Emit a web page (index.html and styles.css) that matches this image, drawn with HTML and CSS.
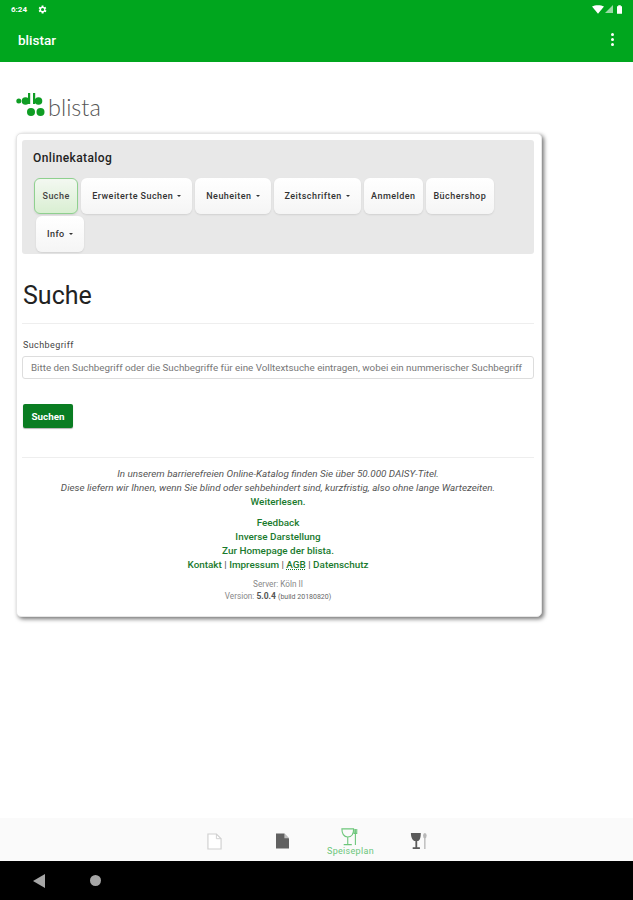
FILE: index.html
```html
<!DOCTYPE html>
<html lang="de">
<head>
<meta charset="utf-8">
<title>blistar</title>
<link rel="stylesheet" href="styles.css">
</head>
<body>
<div class="app">
  <header class="appbar">
    <div class="status">
      <div class="status-left">
        <span class="time">6:24</span>
        <svg class="gear" viewBox="0 0 24 24" width="11" height="11"><path fill="#fff" d="M19.4 13a7.5 7.5 0 0 0 0-2l2.1-1.6-2-3.500-2.500 1a7.500 7.500 0 0 0-1.700-1L15.400 3.300h-4l-.4 2.600a7.500 7.500 0 0 0-1.700 1l-2.500-1-2 3.500L6.900 11a7.500 7.500 0 0 0 0 2l-2.100 1.600 2 3.500 2.500-1a7.500 7.500 0 0 0 1.700 1l.4 2.600h4l.4-2.600a7.500 7.500 0 0 0 1.700-1l2.500 1 2-3.500zM13.400 15.500a3.500 3.500 0 1 1 0-7 3.500 3.500 0 0 1 0 7z" transform="translate(-1.200 0)"/></svg>
      </div>
      <div class="status-right">
        <svg viewBox="0 0 14 10" width="12" height="9"><path fill="#fff" d="M0 1.500C4 -.5 10 -.5 14 1.500L7 10z"/></svg>
        <svg viewBox="0 0 10 10" width="8" height="8"><path fill="#fff" fill-opacity=".6" d="M10 0v10H0z"/></svg>
        <svg class="battery" viewBox="0 0 6 10" width="5" height="9"><path fill="#fff" d="M1.500 0h3v1H6v9H0V1h1.500z"/></svg>
      </div>
    </div>
    <div class="toolbar">
      <span class="app-title">blistar</span>
      <span class="menu-dots"><i></i><i></i><i></i></span>
    </div>
  </header>

  <main class="content">
    <div class="logo">
      <svg viewBox="0 0 30 28" width="30" height="28">
        <g fill="#0f9d24">
          <circle cx="2.800" cy="9" r="2.500"/>
          <circle cx="9.500" cy="9" r="3.800"/>
          <circle cx="22.500" cy="9" r="3.800"/>
          <circle cx="15" cy="20" r="4"/>
          <circle cx="24.500" cy="20" r="4"/>
          <rect x="12" y="1" width="2.200" height="11"/>
          <rect x="17" y="1" width="2.200" height="11"/>
        </g>
      </svg>
      <span class="logo-text">blista</span>
    </div>

    <section class="card">
      <div class="jumbotron">
        <h2 class="jumbo-title">Onlinekatalog</h2>
        <nav class="pills">
          <a class="pill active">Suche</a>
          <a class="pill">Erweiterte Suchen <b class="caret"></b></a>
          <a class="pill">Neuheiten <b class="caret"></b></a>
          <a class="pill">Zeitschriften <b class="caret"></b></a>
          <a class="pill plain">Anmelden</a>
          <a class="pill plain">Büchershop</a>
          <a class="pill">Info <b class="caret"></b></a>
        </nav>
      </div>

      <h1 class="page-title">Suche</h1>
      <hr class="rule rule-title">

      <label class="field-label">Suchbegriff</label>
      <div class="input">Bitte den Suchbegriff oder die Suchbegriffe für eine Volltextsuche eintragen, wobei ein nummerischer Suchbegriff</div>
      <a class="submit">Suchen</a>
      <hr class="rule rule-foot">

      <footer class="foot">
        <p class="intro">In unserem barrierefreien Online-Katalog finden Sie über 50.000 DAISY-Titel.<br>Diese liefern wir Ihnen, wenn Sie blind oder sehbehindert sind, kurzfristig, also ohne lange Wartezeiten.</p>
        <a class="link more">Weiterlesen.</a>
        <div class="links">
          <a class="link">Feedback</a>
          <a class="link">Inverse Darstellung</a>
          <a class="link">Zur Homepage der blista.</a>
          <span><a class="link">Kontakt</a> | <a class="link">Impressum</a> | <a class="link abbr">AGB</a> | <a class="link">Datenschutz</a></span>
        </div>
        <div class="server">Server: Köln II</div>
        <div class="version">Version: <b>5.0.4</b> <small>(build 20180820)</small></div>
      </footer>
    </section>
  </main>

  <nav class="tabs">
    <div class="tab">
      <svg viewBox="0 0 16 18" width="15" height="17"><path fill="#fff" stroke="#cfcfcf" stroke-width="1.200" d="M1 1h9l5 5v11H1z"/><path fill="none" stroke="#cfcfcf" d="M10 1v5h5"/></svg>
    </div>
    <div class="tab">
      <svg viewBox="0 0 14 16" width="13" height="16"><path fill="#616161" d="M0 0h9l5 5v11H0z"/><path fill="#fff" fill-opacity=".6" d="M9 0v5h5z"/></svg>
    </div>
    <div class="tab tab-active">
      <svg viewBox="0 0 20 20" width="18" height="18">
        <path fill="none" stroke="#6cc67a" stroke-width="1.200" d="M1 1h13c0 5-2 9-6.500 9S1 6 1 1zM7.500 10v8M3 18.500h9"/>
        <path fill="none" stroke="#6cc67a" stroke-width="1.200" d="M16 1v18M14.500 1v5h3V1"/>
      </svg>
      <span class="tab-label">Speiseplan</span>
    </div>
    <div class="tab">
      <svg viewBox="0 0 20 20" width="18" height="18">
        <path fill="#5a5a5a" d="M1 1h11c0 5-1 9-4 9v7h3v2H3v-2h3v-7C3 10 1 6 1 1z"/>
        <path fill="none" stroke="#b8b8b8" stroke-width="1.500" d="M16.500 6v13"/>
        <ellipse cx="16.500" cy="4" rx="2" ry="3" fill="#b8b8b8"/>
      </svg>
    </div>
  </nav>

  <div class="sysnav">
    <svg viewBox="0 0 12 14" width="12" height="14"><path fill="#a6a6a6" d="M12 0v14L0 7z"/></svg>
    <span class="home"></span>
  </div>
</div>
</body>
</html>
```
FILE: styles.css
```css
* { box-sizing: border-box; }
html, body { margin: 0; padding: 0; }
body {
  width: 633px;
  height: 900px;
  overflow: hidden;
  background: #fff;
  font-family: Roboto, "Liberation Sans", sans-serif;
  color: #333;
}
.app { display: flex; flex-direction: column; height: 900px; }

.appbar { height: 62px; flex: none; background: #00a61e; color: #fff; }
.status {
  height: 17px;
  display: flex;
  justify-content: space-between;
  align-items: center;
  padding: 1px 11px 0 11px;
}
.status-left { display: flex; align-items: center; gap: 10px; }
.status-right { display: flex; align-items: center; gap: 1px; }
.battery { margin-left: 3px; }
.time { font-size: 8px; font-weight: 700; }
.gear { display: block; }
.toolbar {
  height: 45px;
  display: flex;
  justify-content: space-between;
  align-items: center;
  padding: 0 19px 0 18px;
}
.app-title { font-size: 13.500px; font-weight: 500; }
.menu-dots { display: flex; flex-direction: column; gap: 2px; }
.menu-dots i { width: 3px; height: 3px; background: #fff; border-radius: 50%; display: block; }

.content { flex: 1; padding: 30px 91px 0 16px; min-height: 0; }
.logo { display: flex; align-items: flex-end; height: 28px; gap: 2px; margin-bottom: 13px; }
.logo svg { display: block; }
.logo-text {
  font-size: 23.500px;
  line-height: 24px;
  padding-bottom: 1px;
  color: #555;
  font-weight: 300;
  font-family: Lato, Roboto, sans-serif;
}

.card {
  height: 484px;
  background: #fff;
  border: 1px solid #e6e6e6;
  border-radius: 5px;
  box-shadow: 2px 2px 4px rgba(0, 0, 0, .55);
  padding: 6px 7px 0 5px;
}
.jumbotron {
  height: 114px;
  background: #e8e8e8;
  border-radius: 3px;
  padding: 11px 11px 0;
}
.jumbo-title { margin: 0 0 12px; font-size: 12px; line-height: 15px; letter-spacing: .4px; font-weight: 500; color: #222; }
.pills { display: flex; flex-wrap: wrap; gap: 2px 3px; padding-left: 3px; }
.pill {
  height: 36px;
  display: flex;
  align-items: center;
  gap: 4px;
  padding: 0 11px;
  background: linear-gradient(#fff, #f5f5f5);
  border-radius: 6px;
  box-shadow: 0 1px 2px rgba(0, 0, 0, .1);
  font-size: 9px;
  letter-spacing: .45px;
  font-weight: 500;
  color: #333;
}
.pill.plain { padding: 0 7.500px; }
.pill.active {
  background: linear-gradient(#f3f8f1, #d9efd2);
  border: 1px solid #8fd08f;
  padding: 0 7.500px;
  color: #444;
  margin-left: -2px;
}
.caret {
  width: 0;
  height: 0;
  border-top: 2.500px solid #333;
  border-left: 2.500px solid transparent;
  border-right: 2.500px solid transparent;
}

.page-title { margin: 26px 0 11px 1px; font-size: 25px; line-height: 32px; font-weight: 400; color: #222; }
.rule { border: 0; border-top: 1px solid #eee; margin: 0; }
.field-label { display: block; margin: 15px 0 0 1px; font-size: 9px; line-height: 12px; letter-spacing: .4px; color: #444; }
.input {
  margin-top: 5px;
  height: 23px;
  padding: 0 8px;
  border: 1px solid #ddd;
  border-radius: 3px;
  font-size: 9.800px;
  line-height: 21px;
  color: #777;
  white-space: nowrap;
  overflow: hidden;
}
.submit {
  display: flex;
  align-items: center;
  justify-content: center;
  margin: 25px 0 0 1px;
  width: 50px;
  height: 24px;
  background: #0a7d22;
  border-radius: 2px;
  box-shadow: 0 1px 1px rgba(0, 0, 0, .3);
  color: #fff;
  font-size: 9.800px;
  font-weight: 700;
}
.rule-foot { margin-top: 29px; }

.foot { text-align: center; font-size: 9.900px; line-height: 14px; color: #555; margin-top: 9px; }
.intro { margin: 0; font-style: italic; }
.link { color: #1a7a2e; font-weight: 500; }
.more { display: block; }
.links { display: flex; flex-direction: column; margin-top: 7px; }
.abbr { text-decoration: underline dotted; }
.server { margin-top: 6px; font-size: 8.200px; line-height: 12px; color: #888; }
.version { font-size: 8.200px; line-height: 12px; color: #888; }
.version b { color: #555; font-size: 8.500px; }
.version small { font-size: 7px; color: #666; }

.tabs {
  height: 43px;
  flex: none;
  background: #fafafa;
  display: grid;
  grid-template-columns: repeat(4, 68px);
  justify-content: center;
  align-items: center;
  justify-items: center;
  padding-top: 3px;
}
.tab { display: flex; flex-direction: column; align-items: center; }
.tab svg { display: block; }
.tab-active { padding-top: 2px; }
.tab-label { font-size: 9px; line-height: 11px; color: #6cc67a; letter-spacing: .3px; }

.sysnav {
  height: 39px;
  flex: none;
  background: #000;
  display: flex;
  align-items: center;
  gap: 45px;
  padding-left: 33px;
}
.sysnav svg { display: block; }
.home { width: 11px; height: 11px; border-radius: 50%; background: #a6a6a6; }
```
